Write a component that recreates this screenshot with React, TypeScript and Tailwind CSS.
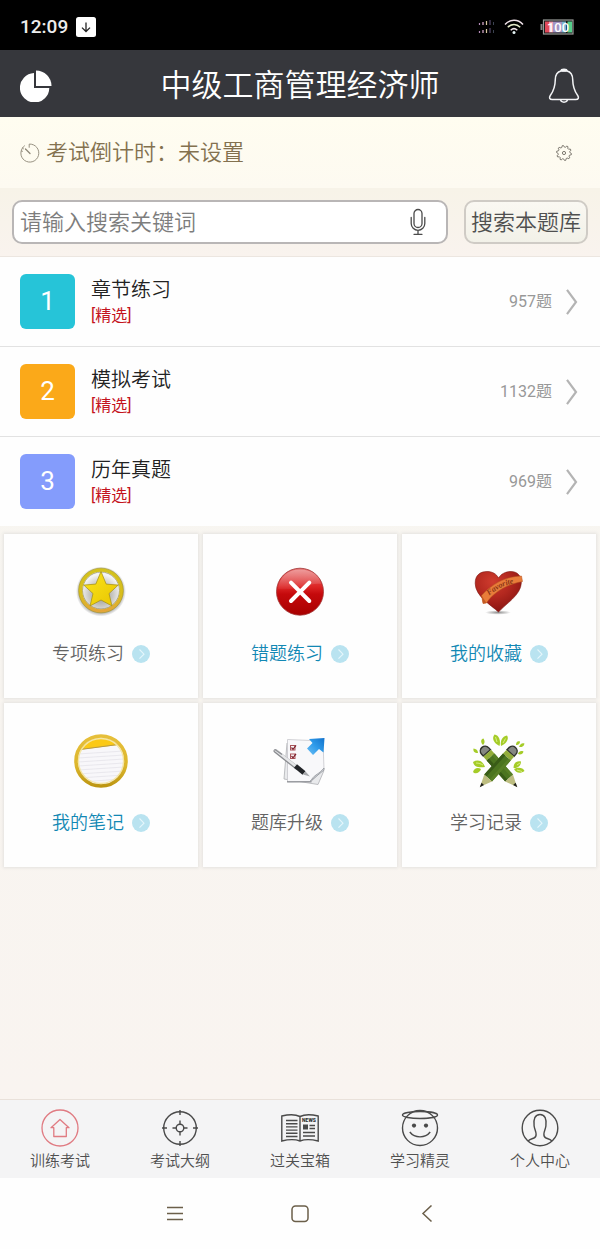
import type { ReactNode, SVGProps } from "react";

type IconProps = SVGProps<SVGSVGElement>;

const sections = [
  { id: 1, title: "章节练习", tag: "[精选]", count: "957题", color: "bg-[#26c4d8]" },
  { id: 2, title: "模拟考试", tag: "[精选]", count: "1132题", color: "bg-[#fba919]" },
  { id: 3, title: "历年真题", tag: "[精选]", count: "969题", color: "bg-[#849cfc]" },
];

const DownloadIcon = (p: IconProps) => (
  <svg viewBox="0 0 20 20" width={20} height={20} aria-hidden="true" {...p}>
    <rect width="20" height="20" rx="2.5" fill="#fff" />
    <path d="M10 5.5v8.8M6 10.6l4 3.9 4-3.9" fill="none" stroke="#222" strokeWidth="1.3" />
  </svg>
);

const SignalIcon = (p: IconProps) => (
  <svg viewBox="0 0 18 16" width={18} height={16} aria-hidden="true" {...p}>
    <path d="M1.5 4v2M1.5 12v2" stroke="#b48ab8" strokeWidth="1.2" />
    <path d="M5 3v3M5 11v3" stroke="#e3b3d6" strokeWidth="1.2" />
    <path d="M8.5 2v4M8.5 10v4" stroke="#d9c9a0" strokeWidth="1.2" />
    <path d="M12 1v5M12 9v5" stroke="#55486c" strokeWidth="1.2" />
    <path d="M15.5 3v3M15.5 11v3" stroke="#3b4350" strokeWidth="1" />
  </svg>
);

const WifiIcon = (p: IconProps) => (
  <svg viewBox="0 0 20 16" width={20} height={16} fill="none" stroke="#f1e3ea" strokeWidth="1.5" aria-hidden="true" {...p}>
    <path d="M1 5.4C6-.1 14-.1 19 5.4" />
    <path d="M3.8 8.3c3.6-3.9 8.8-3.9 12.4 0" stroke="#e7eccb" />
    <path d="M6.7 11.2c2-2 4.6-2 6.6 0" />
    <circle cx="10" cy="13.4" r="1.5" fill="#e4f3f4" stroke="none" />
  </svg>
);

const BatteryIcon = (p: IconProps) => (
  <svg viewBox="0 0 34 16" width={34} height={16} aria-label="电量 100" {...p}>
    <path d="M1.5 5v6" stroke="#888" strokeWidth="2" />
    <rect x="3.5" y="1" width="29.5" height="14" fill="#151515" stroke="#999c98" strokeWidth="1.2" />
    <path d="M5 2.5h4v11H5z" fill="#e24a5b" />
    <path d="M9 2.5h4v11H9z" fill="#f0a0b2" />
    <path d="M13 2.5h9v11h-9z" fill="#a293c2" />
    <path d="M22 2.5h4v11h-4z" fill="#7ab5cf" />
    <path d="M27.5 2.5H32v11h-4.5z" fill="#55cf8b" />
    <text x="18" y="12.5" textAnchor="middle" fontSize="13" fontWeight="500" fill="#fff" fontFamily="Roboto, sans-serif">100</text>
  </svg>
);

const PieIcon = (p: IconProps) => (
  <svg viewBox="0 0 32 32" width={32} height={32} fill="#fff" aria-hidden="true" {...p}>
    <path d="M14 3.1V18h15.3A14.7 14.7 0 1 1 14 3.1z" />
    <path d="M16 .5A15.5 15.5 0 0 1 31.5 16H16z" />
  </svg>
);

const BellIcon = (p: IconProps) => (
  <svg viewBox="0 0 32 36" width={32} height={36} fill="none" stroke="#f2f3f5" strokeWidth="1.5" strokeLinejoin="round" aria-hidden="true" {...p}>
    <path d="M13 3c-4 .9-5.600 4-5.700 8.500-.1 7-1.300 11-5 16-1.500 2.300-.7 4 1.900 4h23.600c2.600 0 3.400-1.700 1.900-4-3.700-5-4.900-9-5-16C24.600 7 23 3.900 19 3z" />
    <path d="M13 3c0-2.300 6-2.300 6 0M12.500 31.500c.5 3.500 6.500 3.500 7 0" />
    <path d="M13.500 2.500h5" strokeWidth="2" />
  </svg>
);

const TimerIcon = (p: IconProps) => (
  <svg viewBox="0 0 20 20" width={20} height={20} fill="none" stroke="#8c8676" strokeWidth=".9" strokeLinecap="round" aria-hidden="true" {...p}>
    <path d="M9.200 4.300V1.100a9 9 0 1 1-4.700 1.700" />
    <path d="M5.500 6l4.500 4.500" strokeWidth="1.3" />
    <path d="M2.500 5l1 .8M1.500 8l1 .3" />
  </svg>
);

// ten teeth, four outline points each
const gearPoints = Array.from({ length: 40 }, (_, i) => {
  const r = i % 4 < 2 ? 7.5 : 5.9;
  const a = ((i + 0.5) / 40) * Math.PI * 2;
  return `${(8 + r * Math.cos(a)).toFixed(2)},${(8 + r * Math.sin(a)).toFixed(2)}`;
}).join(" ");

const GearIcon = (p: IconProps) => (
  <svg viewBox="0 0 16 16" width={16} height={16} fill="none" stroke="#6f6b62" strokeWidth=".9" aria-hidden="true" {...p}>
    <polygon points={gearPoints} strokeLinejoin="round" />
    <circle cx="8" cy="8" r="1.600" />
  </svg>
);

const MicIcon = (p: IconProps) => (
  <svg viewBox="0 0 16 28" width={16} height={28} fill="none" stroke="#4b4b4b" strokeWidth="1.3" strokeLinecap="round" aria-hidden="true" {...p}>
    <rect x="4" y="1.5" width="8" height="18" rx="4" />
    <path d="M1.200 9.500v6a6.800 6.800 0 0 0 13.600 0v-6M8 22.500v3.700M4 26.300h8" />
  </svg>
);

const ChevronIcon = (p: IconProps) => (
  <svg viewBox="0 0 12 26" width={12} height={26} fill="none" stroke="#b4b4b4" strokeWidth="2.200" aria-hidden="true" {...p}>
    <path d="M1 .8L10 13 1 25.200" />
  </svg>
);

const ArrowBadge = () => (
  <svg viewBox="0 0 18 18" width={18} height={18} aria-hidden="true">
    <circle cx="9" cy="9" r="9" fill="#b9e3f0" />
    <path d="M7.500 4.500l4.500 4.700-4.500 4.500" fill="none" stroke="#e6f6fb" strokeWidth="1.1" />
  </svg>
);

const StarArt = () => (
  <svg viewBox="0 0 56 56" width={56} height={56} aria-hidden="true">
    <defs>
      <linearGradient id="star-ring" x1="0" y1="0" x2="0" y2="1">
        <stop offset="0" stopColor="#d3c21c" />
        <stop offset=".6" stopColor="#d8bd1d" />
        <stop offset="1" stopColor="#e3a63a" />
      </linearGradient>
      <linearGradient id="star-fill" x1="0" y1="0" x2="1" y2="1">
        <stop offset="0" stopColor="#fbe51c" />
        <stop offset="1" stopColor="#e8c400" />
      </linearGradient>
      <radialGradient id="star-shadow">
        <stop offset=".82" stopColor="#555" stopOpacity=".55" />
        <stop offset="1" stopColor="#555" stopOpacity="0" />
      </radialGradient>
      <radialGradient id="star-well" cy=".6">
        <stop offset="0" stopColor="#8f8d85" />
        <stop offset=".6" stopColor="#c9c8c4" />
        <stop offset="1" stopColor="#f4f4f2" />
      </radialGradient>
    </defs>
    <circle cx="28" cy="27.500" r="25" fill="url(#star-shadow)" />
    <circle cx="28" cy="26.500" r="20" fill="url(#star-well)" />
    <circle cx="28" cy="26.500" r="18.500" fill="none" stroke="#97926f" strokeWidth=".8" />
    <circle cx="28" cy="26.500" r="20.500" fill="none" stroke="url(#star-ring)" strokeWidth="3.600" />
    <circle cx="28" cy="26.500" r="22.400" fill="none" stroke="#a3941d" strokeWidth=".6" />
    <path
      d="M28 7.500l5.200 12.600 12 1-9.200 8.500 3 12.400L28 36l-11 6 3-12.400-9.200-8.500 12-1z"
      fill="url(#star-fill)"
      stroke="#a08c12"
      strokeWidth=".7"
    />
  </svg>
);

const WrongArt = () => (
  <svg viewBox="0 0 56 56" width={56} height={56} aria-hidden="true">
    <defs>
      <linearGradient id="wrong-fill" x1="0" y1="0" x2="0" y2="1">
        <stop offset="0" stopColor="#e56a6a" />
        <stop offset=".4" stopColor="#dc2424" />
        <stop offset=".55" stopColor="#c50a0c" />
        <stop offset="1" stopColor="#a80000" />
      </linearGradient>
      <linearGradient id="wrong-gloss" x1="0" y1="0" x2="0" y2="1">
        <stop offset="0" stopColor="#fff" stopOpacity=".35" />
        <stop offset="1" stopColor="#fff" stopOpacity=".05" />
      </linearGradient>
    </defs>
    <circle cx="28" cy="27.700" r="23.500" fill="url(#wrong-fill)" stroke="#a13535" strokeWidth=".8" />
    <path d="M6 25C7 13 16 5.500 28 5.500S48 12 49 20C38 18 28 27 6 25z" fill="url(#wrong-gloss)" />
    <path d="M19 18.700l18.300 18.300M37.300 18.700L19 37" stroke="#fff" strokeWidth="4" strokeLinecap="round" />
  </svg>
);

const HeartArt = () => (
  <svg viewBox="0 0 56 56" width={56} height={56} aria-hidden="true">
    <defs>
      <radialGradient id="heart-fill" cx=".38" cy=".25" r=".75">
        <stop offset="0" stopColor="#cf3c2e" />
        <stop offset=".5" stopColor="#b3281f" />
        <stop offset="1" stopColor="#8a1512" />
      </radialGradient>
      <radialGradient id="heart-shadow">
        <stop offset="0" stopColor="#444" stopOpacity=".6" />
        <stop offset="1" stopColor="#444" stopOpacity="0" />
      </radialGradient>
      <path id="heart-band" d="M18 31.500C25 25.500 32 21.500 46 18.500" />
    </defs>
    <ellipse cx="27" cy="48.500" rx="13" ry="2.200" fill="url(#heart-shadow)" />
    <path
      d="M27.500 48C20 41 4.500 32.500 4.200 19.500 4 10.500 10 7.500 16 7.500c5.500 0 9.500 2.500 11.500 6.500 2.500-4 7-6.500 12.500-6.500 6 0 10.500 4 10.300 11.500C50 31 34.500 40 27.500 48z"
      fill="url(#heart-fill)"
      stroke="#7d1713"
      strokeWidth=".6"
    />
    <path d="M10.500 31.500C21 20 34 12.500 50.500 12l1 5.500C37 20 23 27.500 15.500 39l-3.500.5z" fill="#e87c3a" stroke="#b5501c" strokeWidth=".5" />
    <path d="M10.500 31.500L12 39.500l3.500-.5z" fill="#c45a22" />
    <text fontSize="8" fontStyle="italic" fontWeight="700" fill="#8a3516" fontFamily="Liberation Serif, serif">
      <textPath href="#heart-band">Favorite</textPath>
    </text>
  </svg>
);

const NoteArt = () => (
  <svg viewBox="0 0 56 56" width={56} height={56} aria-hidden="true">
    <defs>
      <linearGradient id="note-ring" x1="0" y1="0" x2="0" y2="1">
        <stop offset="0" stopColor="#e6bf3a" />
        <stop offset=".6" stopColor="#dcb62c" />
        <stop offset="1" stopColor="#bd9612" />
      </linearGradient>
      <clipPath id="note-clip">
        <circle cx="28" cy="28" r="23" />
      </clipPath>
    </defs>
    <circle cx="28" cy="28" r="24" fill="#f8f7fa" />
    <g clipPath="url(#note-clip)">
      <path d="M4 4h48v7L4 17z" fill="#fbc916" />
      <path d="M5 16.800l44-5.800" stroke="#b59a4a" strokeWidth="1" />
      <path
        d="M5 21l46-3M5 25l46-3M5 29l46-3M5 33l46-3M5 37l46-3M5 41l46-3M5 45l46-3M8 49l40-3"
        stroke="#e4e3ea"
        strokeWidth=".8"
      />
    </g>
    <circle cx="28" cy="28" r="22.500" fill="none" stroke="#f5e6a4" strokeWidth="1.3" />
    <circle cx="28" cy="28" r="25" fill="none" stroke="url(#note-ring)" strokeWidth="3.600" />
  </svg>
);

const UpgradeArt = () => (
  <svg viewBox="0 0 56 56" width={56} height={56} aria-hidden="true">
    <defs>
      <linearGradient id="upgrade-arrow" x1="0" y1="1" x2="1" y2="0">
        <stop offset="0" stopColor="#6fc0f5" />
        <stop offset=".5" stopColor="#2e9bea" />
        <stop offset="1" stopColor="#1272cc" />
      </linearGradient>
    </defs>
    <path d="M15 10l-3 36 34 5.500 6-14z" fill="#e9eaec" stroke="#aeb0b4" strokeWidth=".8" />
    <path d="M15.500 6.500L51 8l1 28-12.500 12.500-24 .5z" fill="#f8f8fa" stroke="#c6c7cb" strokeWidth=".8" />
    <path d="M15 48.800h24.500" stroke="#8b8d92" strokeWidth="1.200" />
    <path d="M38 48.500c2-2.500 3.500-5 6-6.500s6-4.500 8-7v2z" fill="#d7d9dd" stroke="#999ca1" strokeWidth=".9" />
    <g fill="none" stroke="#a9555a" strokeWidth="1">
      <rect x="18.500" y="12.500" width="4.500" height="4.500" />
      <rect x="18.500" y="21" width="4.500" height="4.500" />
    </g>
    <path d="M19.500 14.500l1.500 1.800 3-4M19.500 23l1.500 1.800 3-4" fill="none" stroke="#7d1f2b" strokeWidth="1.200" />
    <path d="M3.500 18l21 16.500" stroke="#8b8d91" strokeWidth="4" strokeLinecap="round" />
    <path d="M4 17.600l20.500 16.200" stroke="#e6e7e9" strokeWidth="2.600" strokeLinecap="round" />
    <path d="M3 16.500l7 5" stroke="#8e9094" strokeWidth="1.500" />
    <path d="M23.500 33l8.500 7" stroke="#222428" strokeWidth="4.800" />
    <path d="M31 41.500l2.500-3 4.500 5z" fill="#a5a7ab" />
    <path d="M35 15.500l6 6.500 6-6 4.500 3.500L52.500 5 37 6l3.500 4z" fill="url(#upgrade-arrow)" />
  </svg>
);

const Pencil = () => (
  <>
    <path d="M-4.800-15v-2.500c0-6.500 9.600-6.500 9.600 0v2.500z" fill="#858782" stroke="#30332c" strokeWidth="1.4" />
    <path d="M-5.200-14.500h10.400v5h-10.400z" fill="#93ad3a" />
    <path d="M-5.200-9.500h10.400v28h-10.400z" fill="#4c7520" />
    <path d="M-5.200-9.500h3v28h-3z" fill="#395c17" />
    <path d="M2.200-9.500h3v28h-3z" fill="#587f26" />
    <path d="M-5.200 18.500h10.400L0 30.500z" fill="#bdbd80" />
    <path d="M-1.700 26.500h3.400L0 31z" fill="#22221c" />
  </>
);

const PencilsArt = () => (
  <svg viewBox="0 0 56 56" width={56} height={56} aria-hidden="true">
    <g fill="#a5cc28">
      <path d="M28.500 13c-6-3-8-8-5-11.500C28 2 30 8 28.500 13z" />
      <path d="M30 13c-1-5 1-9.500 6-10.500C38.500 6 35 11 30 13z" />
      <path d="M12 12C9 9 10 6 12.500 5.500 14 8 14 10 12 12z" />
      <path d="M7 20c-4 0-5-2-4.500-4.500C5 16 7 17 7 20z" />
      <path d="M14 34C8 35 3 34 2 29c5-3 10-1 12 5z" />
      <path d="M10 36c-1 4-6 5.500-8 3 1-4 5-5 8-3z" />
      <path d="M45 12c0-3 1.500-4.500 4-3.500 0 2.500-2 4-4 3.500z" />
      <path d="M48 14c1-3 3-4.500 5.500-3.500-.5 3-3 4-5.500 3.500z" />
      <path d="M47 21c1-3 3-3.500 5.500-2.500-.5 2.500-3 3.500-5.500 2.500z" />
      <path d="M42.500 35c0-5 3-7.500 7.500-6.500 0 4-3 7-7.500 6.500z" />
      <path d="M43 36c4-2 9-1.500 10.500 2-4 3-9 2-10.500-2z" />
    </g>
    <g fill="none" stroke="#dcef8b" strokeWidth=".9">
      <path d="M26 9l-1.500-5M32 10l2.500-4.500M5 30c3 0 5 1 7 2M46 32l3-2M46 37l5 1.500" />
    </g>
    <g transform="translate(28.800 34.500) rotate(-41.500) translate(0 -4.500)">
      <Pencil />
    </g>
    <g transform="translate(26.500 34.500) rotate(42) translate(0 -4.500)">
      <Pencil />
    </g>
  </svg>
);

const HomeIcon = () => (
  <svg viewBox="0 0 40 40" width={40} height={40} fill="none" stroke="#e07b82" strokeWidth="1.300" aria-hidden="true">
    <circle cx="20" cy="20" r="18" />
    <path d="M20 11.500l9 8.200h-2.700v8.800H13.800v-8.800H11z" strokeLinejoin="round" />
  </svg>
);

const TargetIcon = () => (
  <svg viewBox="0 0 40 40" width={40} height={40} fill="none" stroke="#4a4a4a" strokeWidth="1.400" aria-hidden="true">
    <circle cx="20" cy="20" r="16.300" />
    <circle cx="20" cy="20" r="3.800" />
    <path d="M20 2v5M20 33v5M2 20h5M33 20h5M20 12.500v3.700M20 23.800v3.700M12.500 20h3.700M23.800 20h3.700" />
  </svg>
);

const NewsIcon = () => (
  <svg viewBox="0 0 40 40" width={40} height={40} fill="none" stroke="#4a4a4a" strokeWidth="1.400" aria-hidden="true">
    <path d="M20 8.500c-4-2-12-2-18.200-.5v25c6.200-1.500 14.200-1.500 18.200 0 4-1.500 12-1.500 18.200 0V8C32 6.500 24 6.500 20 8.500zM20 8.500V33" />
    <path d="M6 12.500h11.500M6 15.700h11.500M6 18.900h11.500M6 22.100h11.500M6 25.300h11.500M6 28.500h11.500M29.500 17.500H35M29.500 20.500H35M23 24.500h12M23 28h12" />
    <rect x="23" y="16.500" width="5" height="5" fill="#4a4a4a" stroke="none" />
    <text x="29" y="14" textAnchor="middle" fontSize="5" fontWeight="900" fill="#333" stroke="none" fontFamily="Roboto, sans-serif">NEWS</text>
  </svg>
);

const SmileIcon = () => (
  <svg viewBox="0 0 40 40" width={40} height={40} fill="none" stroke="#4a4a4a" strokeWidth="1.400" aria-hidden="true">
    <circle cx="20" cy="20" r="17.500" />
    <ellipse cx="20" cy="7" rx="17.500" ry="3.500" />
    <circle cx="14" cy="17.600" r="2.100" fill="#4a4a4a" stroke="none" />
    <circle cx="26" cy="17.600" r="2.100" fill="#4a4a4a" stroke="none" />
    <path d="M9.800 24c5 6.500 15.400 6.500 20.400 0" />
  </svg>
);

const PersonIcon = () => (
  <svg viewBox="0 0 40 40" width={40} height={40} fill="none" stroke="#4a4a4a" strokeWidth="1.400" aria-hidden="true">
    <circle cx="20" cy="20" r="17.800" />
    <path d="M8 33c2-1.800 4-2.200 6-3 1.800-.7 2.200-2 2.100-4-.1-2.500-1.500-4.500-2-8-.9-7 .9-11.500 5.900-11.500s6.800 4.500 5.900 11.500c-.5 3.500-1.900 5.500-2 8-.1 2 .3 3.300 2.100 4 2 .8 4 1.200 6 3" />
  </svg>
);

type Tile = { label: string; art: ReactNode; color: string };

const tiles: Tile[] = [
  { label: "专项练习", art: <StarArt />, color: "text-[#636363]" },
  { label: "错题练习", art: <WrongArt />, color: "text-[#1288b4]" },
  { label: "我的收藏", art: <HeartArt />, color: "text-[#1288b4]" },
  { label: "我的笔记", art: <NoteArt />, color: "text-[#1288b4]" },
  { label: "题库升级", art: <UpgradeArt />, color: "text-[#636363]" },
  { label: "学习记录", art: <PencilsArt />, color: "text-[#636363]" },
];

const tabs = [
  { label: "训练考试", icon: <HomeIcon /> },
  { label: "考试大纲", icon: <TargetIcon /> },
  { label: "过关宝箱", icon: <NewsIcon /> },
  { label: "学习精灵", icon: <SmileIcon /> },
  { label: "个人中心", icon: <PersonIcon /> },
];

function StatusBar() {
  return (
    <div className="flex h-[50px] items-center bg-black px-5 pt-1">
      <span className="text-[19px] font-medium leading-6 text-[#ececec]">12:09</span>
      <DownloadIcon className="ml-2" />
      <div className="ml-auto flex items-center pr-1.5">
        <SignalIcon />
        <WifiIcon className="ml-2" />
        <BatteryIcon className="ml-4" />
      </div>
    </div>
  );
}

function Header() {
  return (
    <header className="flex h-[67px] items-center bg-[#36373c] px-5 pt-1">
      <button type="button" aria-label="统计">
        <PieIcon />
      </button>
      <h1 className="flex-1 text-center text-[31px] font-[350] leading-10 text-white">中级工商管理经济师</h1>
      <button type="button" aria-label="通知">
        <BellIcon />
      </button>
    </header>
  );
}

function Countdown() {
  return (
    <div className="flex h-[71px] items-center bg-linear-to-b from-[#fffdf0] to-[#fdfaf1] px-5">
      <TimerIcon />
      <p className="ml-1.5 text-[22px] font-[350] leading-8 text-[#83714f]">考试倒计时：未设置</p>
      <button type="button" aria-label="设置" className="ml-auto flex w-8 justify-center">
        <GearIcon />
      </button>
    </div>
  );
}

function SearchBar() {
  return (
    <form
      className="flex gap-4 border-b border-[#ece6e0] bg-linear-to-b from-[#f7f3e8] to-[#f9f3ee] p-3"
      onSubmit={(e) => e.preventDefault()}
    >
      <div className="flex h-11 min-w-0 flex-1 items-center rounded-[10px] border-2 border-[#b9b6b6] bg-white pl-1.5 pr-5">
        <input
          type="text"
          aria-label="搜索关键词"
          placeholder="请输入搜索关键词"
          className="h-full min-w-0 flex-1 bg-transparent text-[22px] font-[350] text-[#444] outline-none placeholder:text-[#7d7d7d]"
        />
        <button type="button" aria-label="语音输入">
          <MicIcon />
        </button>
      </div>
      <button
        type="submit"
        className="h-11 rounded-[10px] border-2 border-[#cfcbc5] bg-linear-to-b from-[#faf8f2] to-[#f2f1e8] px-[5px] text-[22px] font-[350] text-[#4f4f4f]"
      >
        搜索本题库
      </button>
    </form>
  );
}

function SectionList() {
  return (
    <ul className="divide-y divide-[#e2e2e2] bg-[#fefefe]">
      {sections.map((s) => (
        <li key={s.id}>
          <a href={`#section-${s.id}`} className="flex h-[89px] items-center pl-5 pr-[22px]">
            <span className={`flex size-[55px] items-center justify-center rounded-md text-[26px] text-white ${s.color}`}>
              {s.id}
            </span>
            <span className="ml-4 flex flex-col">
              <span className="text-xl font-[350] leading-7 text-[#222]">{s.title}</span>
              <span className="text-base leading-6 text-[#c4121c]">{s.tag}</span>
            </span>
            <span className="ml-auto text-base text-[#989898]">{s.count}</span>
            <ChevronIcon className="ml-[14px]" />
          </a>
        </li>
      ))}
    </ul>
  );
}

function TileGrid() {
  return (
    <div className="grid grid-cols-3 gap-[5px] px-1 pt-2">
      {tiles.map((t) => (
        <a
          key={t.label}
          href={`#${t.label}`}
          className="flex flex-col items-center gap-5 bg-[#fefefe] py-[30px] shadow-[0_0_3px_1px_#e4e3df]"
        >
          {t.art}
          <span className={`flex items-center gap-2 text-lg font-[350] leading-7 ${t.color}`}>
            {t.label}
            <ArrowBadge />
          </span>
        </a>
      ))}
    </div>
  );
}

function TabBar() {
  return (
    <nav className="grid grid-cols-5 border-t border-[#e9e1da] bg-[#f4f4f5] pb-1 pt-2">
      {tabs.map((t) => (
        <a key={t.label} href={`#${t.label}`} className="flex flex-col items-center text-[15px] font-[350] leading-[26px] text-[#505050]">
          {t.icon}
          {t.label}
        </a>
      ))}
    </nav>
  );
}

function SystemNav() {
  return (
    <div className="flex h-[71px] items-center justify-center bg-[#fefefe] text-[#6b5f4a]">
      <button type="button" aria-label="菜单" className="flex w-[126px] justify-center">
        <svg viewBox="0 0 18 18" width={18} height={18} fill="none" stroke="currentColor" strokeWidth="1.5">
          <path d="M2 2.500h16M2 8.500h16M2 14.500h16" />
        </svg>
      </button>
      <button type="button" aria-label="主页" className="flex w-[126px] justify-center">
        <svg viewBox="0 0 18 18" width={18} height={18} fill="none" stroke="currentColor" strokeWidth="1.5">
          <rect x="1" y="1" width="16" height="15.500" rx="3.500" />
        </svg>
      </button>
      <button type="button" aria-label="返回" className="flex w-[126px] justify-center">
        <svg viewBox="0 0 18 18" width={18} height={18} fill="none" stroke="currentColor" strokeWidth="1.5">
          <path d="M14.500 .5L6 8.500l8.500 8" />
        </svg>
      </button>
    </div>
  );
}

export default function App() {
  return (
    <div className="flex min-h-screen flex-col bg-[#f9f4f0] font-[Roboto,'Noto_Sans_CJK_SC',sans-serif]">
      <StatusBar />
      <Header />
      <Countdown />
      <SearchBar />
      <main className="flex-1 bg-linear-to-b from-[#f7f6f1] to-[#f9f4f0]">
        <SectionList />
        <TileGrid />
      </main>
      <TabBar />
      <SystemNav />
    </div>
  );
}
